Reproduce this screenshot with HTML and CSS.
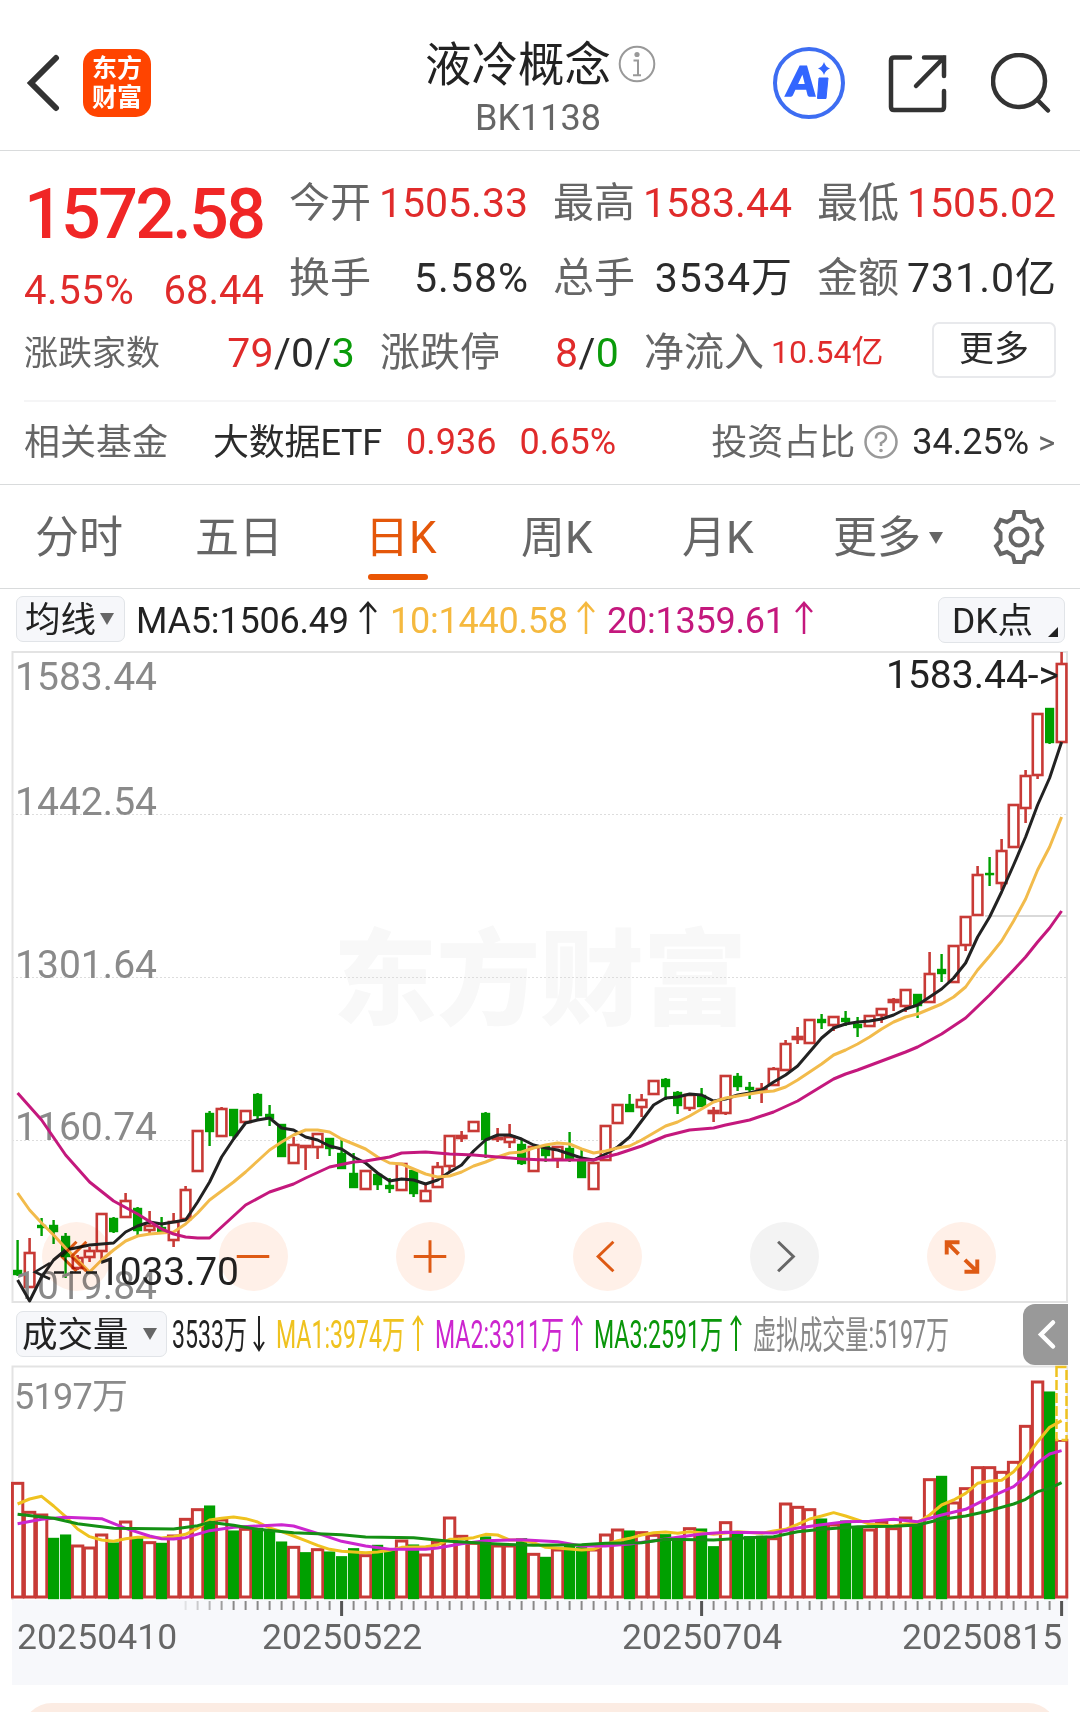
FILE: index.html
```html
<!DOCTYPE html>
<html lang="zh-CN">
<head>
    <meta charset="UTF-8">
    <meta name="viewport" content="width=device-width, initial-scale=1.0">
    <title>液冷概念 BK1138</title>
    <link rel="stylesheet" href="styles.css">
</head>
<body>

<header class="header">
    <svg class="back" width="34" height="60" viewBox="0 0 34 60"><path d="M30 5L5 30L30 55"/></svg>
    <div class="logo"><span>东方</span><span>财富</span></div>
    <div class="title">
        <h1>液冷概念<svg width="38" height="38" viewBox="0 0 38 38"><circle cx="19" cy="19" r="17.3"/><circle class="dot" cx="19" cy="9.5" r="2.6"/><path d="M15.5 15.5H20V30M15 30.3H23"/></svg></h1>
        <p>BK1138</p>
    </div>
    <div class="actions">
        <svg width="74" height="74" viewBox="0 0 74 74">
            <circle cx="37" cy="37" r="34" fill="none" stroke="#3d6df2" stroke-width="4"/>
            <text class="ai" x="19" y="50" transform="skewX(-6)">A</text>
            <path d="M47 32H56L54 52.5H45.5Z" fill="#3366ff" stroke="#3366ff" stroke-linejoin="round"/>
            <path d="M52 16Q53.500 21 58 22.500Q53.500 24 52 29Q50.500 24 46 22.500Q50.500 21 52 16Z" fill="#3366ff"/>
        </svg>
        <svg width="60" height="60" viewBox="0 0 60 60" class="line"><path d="M22 3.500H6Q3 3.500 3 6.500V53Q3 56 6 56H53Q56 56 56 53V37M36 3.500H56V22M56 3.500L28 32"/></svg>
        <svg width="62" height="62" viewBox="0 0 62 62" class="line"><circle cx="28" cy="28" r="26"/><path d="M46.500 47L57 57.500"/></svg>
    </div>
</header>

<section class="quote">
    <div class="summary">
        <div class="price">1572.58</div>
        <div class="change"><span>4.55%</span><span>68.44</span></div>
    </div>
    <div class="cell"><label>今开</label><b class="up">1505.33</b></div>
    <div class="cell"><label>最高</label><b class="up">1583.44</b></div>
    <div class="cell"><label>最低</label><b class="up">1505.02</b></div>
    <div class="cell"><label>换手</label><b class="wide">5.58%</b></div>
    <div class="cell"><label>总手</label><b class="wide cjk">3534万</b></div>
    <div class="cell"><label>金额</label><b class="wide cjk">731.0亿</b></div>
</section>

<section class="breadth">
    <div class="cell count"><label>涨跌家数</label><b><i class="up">79</i>/0/<i class="down">3</i></b></div>
    <div class="cell limit"><label>涨跌停</label><b><i class="up">8</i>/<i class="down">0</i></b></div>
    <div class="inflow"><label>净流入</label><b class="up cjk">10.54亿</b></div>
    <button class="more">更多</button>
</section>

<section class="fund">
    <label>相关基金</label>
    <span class="fund-name cjk">大数据ETF</span>
    <span class="up">0.936</span>
    <span class="up rate">0.65%</span>
    <label class="ratio">投资占比</label>
    <svg width="36" height="36" viewBox="0 0 36 36"><circle cx="18" cy="18" r="15.500"/><path d="M13 14.500Q13 9 18 9Q23 9 23 13.500Q23 16.500 18 19V22"/><circle class="dot" cx="18" cy="26.500" r="1.800"/></svg>
    <span class="ratio-value">34.25%</span>
    <span class="gt">&gt;</span>
</section>

<nav class="tabs">
    <a>分时</a>
    <a>五日</a>
    <a class="active">日K</a>
    <a>周K</a>
    <a>月K</a>
    <a>更多<i class="caret"></i></a>
    <svg width="56" height="56" viewBox="0 0 56 56" class="gear">
        <path d="M23.500 3H32.500L34 9.500L40 13L46.500 11L51 19L46.500 24V32L51 37L46.500 45L40 43L34 46.500L32.500 53H23.500L22 46.500L16 43L9.500 45L5 37L9.500 32V24L5 19L9.500 11L16 13L22 9.500Z"/>
        <circle cx="28" cy="28" r="8.500"/>
    </svg>
</nav>

<div class="ma-bar">
    <button class="select">均线<i class="caret"></i></button>
    <svg class="legend" width="800" height="60" viewBox="130 590 800 60">
        <text x="136" y="633.500" textLength="213" fill="#222">MA5:1506.49</text>
        <path d="M368 635V605M360 613L368 604L376 613" stroke="#222"/>
        <text x="390" y="633.500" textLength="178" fill="#f5b93f">10:1440.58</text>
        <path d="M586 635V605M578 613L586 604L594 613" stroke="#f5b93f"/>
        <text x="607" y="633.500" textLength="178" fill="#c4187d">20:1359.61</text>
        <path d="M804 635V605M796 613L804 604L812 613" stroke="#c4187d"/>
    </svg>
    <button class="select dk">DK点<i class="corner"></i></button>
</div>

<div class="chart">
    <svg id="kline" width="1058" height="652" viewBox="11 651 1058 652"></svg>
    <div class="tools">
        <span class="tool"><svg viewBox="0 0 70 70"><path d="M35 20L20 35L35 50M45 20L30 35L45 50"/></svg></span>
        <span class="tool"><svg viewBox="0 0 70 70"><path d="M18 35H51"/></svg></span>
        <span class="tool"><svg viewBox="0 0 70 70"><path d="M18 35H51M34.500 18.500V51.500"/></svg></span>
        <span class="tool"><svg viewBox="0 0 70 70"><path d="M41 20L25.500 35L41 50"/></svg></span>
        <span class="tool off"><svg viewBox="0 0 70 70"><path d="M28.500 20L44 35L28.500 50"/></svg></span>
        <span class="tool"><svg viewBox="0 0 70 70"><path class="thick" d="M20 33V20.500H33M20 20.500L32 32.500M51 38V50.500H38M51 50.500L38.500 38.500"/></svg></span>
    </div>
</div>

<div class="vol-bar">
    <button class="select">成交量<i class="caret"></i></button>
    <svg class="legend narrow" width="800" height="62" viewBox="170 1303 800 62">
        <text x="172" y="1347.500" textLength="75" lengthAdjust="spacingAndGlyphs" fill="#222">3533万</text>
        <path d="M259 1316V1350M254 1342L259 1350L264 1342" stroke="#222"/>
        <text x="276" y="1347.500" textLength="129" lengthAdjust="spacingAndGlyphs" fill="#efc21f">MA1:3974万</text>
        <path d="M418 1351V1317M413 1325L418 1317L423 1325" stroke="#efc21f"/>
        <text x="435" y="1347.500" textLength="129" lengthAdjust="spacingAndGlyphs" fill="#cc26cf">MA2:3311万</text>
        <path d="M577 1351V1317M572 1325L577 1317L582 1325" stroke="#cc26cf"/>
        <text x="594" y="1347.500" textLength="129" lengthAdjust="spacingAndGlyphs" fill="#0a960a">MA3:2591万</text>
        <path d="M736 1351V1317M731 1325L736 1317L741 1325" stroke="#0a960a"/>
        <text x="753" y="1347.500" textLength="196" lengthAdjust="spacingAndGlyphs" fill="#888">虚拟成交量:5197万</text>
    </svg>
    <div class="fold"><svg width="46" height="61" viewBox="0 0 46 61"><path d="M30 18.500L18 30.500L30 42.500"/></svg></div>
</div>

<svg id="volume" width="1058" height="235" viewBox="11 1365 1058 235"></svg>

<div class="axis">
    <svg id="ticks" width="1056" height="17" viewBox="12 1600 1056 17"></svg>
    <div class="dates">
        <span>20250410</span><span>20250522</span><span>20250704</span><span>20250815</span>
    </div>
</div>

<div class="banner"></div>

<script src="chart.js"></script>
</body>
</html>
```
FILE: styles.css
```css
* {
    box-sizing: border-box;
}
body {
    margin: 0;
    width: 1080px;
    height: 1712px;
    overflow: hidden;
    background: #fff;
    color: #2b2b2b;
    font-family: Roboto, "Noto Sans CJK SC", sans-serif;
}
h1, p {
    margin: 0;
    font-weight: 400;
}
b, i {
    font-weight: 400;
    font-style: normal;
}
label {
    padding-bottom: 7px;
    color: #666;
}
/* numbers with a Chinese unit sit on the same line as plain ones */
.cjk {
    padding-bottom: 7px;
}
.up {
    color: #e02b2b;
}
.down {
    color: #0a9b0a;
}

/* header */
.header {
    height: 151px;
    display: grid;
    grid-template-columns: 83px 200px 1fr 307px;
    border-bottom: 1px solid #d9dbdc;
}
.back {
    margin: 53px 0 0 26px;
    fill: none;
    stroke: #333;
    stroke-width: 6;
    stroke-linecap: round;
}
.logo {
    width: 68px;
    height: 68px;
    margin-top: 49px;
    padding-top: 5px;
    border-radius: 15px;
    background: #ff4400;
    color: #fff;
    font-size: 25px;
    font-weight: 700;
    line-height: 29px;
    text-align: center;
}
.logo span {
    display: block;
}
.title {
    padding: 30px 0 0 142px;
}
.title h1 {
    display: flex;
    align-items: center;
    gap: 7px;
    height: 60px;
    font-size: 46.5px;
    white-space: nowrap;
    color: #222;
}
.title h1 svg {
    margin-top: 7px;
    fill: none;
    stroke: #999;
    stroke-width: 2;
}
.dot {
    fill: #999;
    stroke: none;
}
.title p {
    margin: 7px 0 0 50px;
    font-size: 36px;
    line-height: 42px;
    color: #666;
}
.actions {
    display: flex;
}
.actions svg:nth-child(1) { margin: 46px 0 0 -1px; }
.actions svg:nth-child(2) { margin: 54px 0 0 42px; }
.actions svg:nth-child(3) { margin: 53px 0 0 43px; }
.line {
    fill: none;
    stroke: #333;
    stroke-width: 4.5;
    stroke-linecap: round;
}
.ai {
    font: 900 41px Lato, sans-serif;
    fill: #3366ff;
    stroke: #3366ff;
    stroke-width: 1.5;
}

/* quote */
.quote {
    display: grid;
    grid-template-columns: 240px repeat(3, 239px);
    grid-template-rows: 75px 75px;
    column-gap: 25px;
    padding: 14px 24px 0;
}
.summary {
    grid-row: span 2;
    color: #f02626;
}
.price {
    height: 97px;
    line-height: 99px;
    font-size: 70px;
    font-weight: 500;
    letter-spacing: -2.7px;
}
.change {
    display: flex;
    justify-content: space-between;
    font-size: 40px;
    line-height: 58px;
    color: #e02b2b;
}
.change span:first-child {
    letter-spacing: 0.6px;
}
.cell {
    display: flex;
    align-items: center;
    justify-content: space-between;
    font-size: 41px;
    white-space: nowrap;
}
.cell .wide {
    letter-spacing: 1px;
    margin-right: -1px;
}
.breadth {
    display: flex;
    align-items: center;
    height: 75px;
    padding: 0 24px;
}
.count {
    width: 331px;
}
.count label {
    font-size: 34px;
    padding-bottom: 5px;
}
.cell.count, .cell.limit {
    letter-spacing: 0.3px;
}
.cell label {
    letter-spacing: 0;
}
.limit {
    width: 239px;
    margin: 0 25px 0 25px;
}
.limit label, .inflow label {
    font-size: 40px;
}
.inflow {
    display: flex;
    align-items: center;
    gap: 7px;
}
.inflow b {
    font-size: 32px;
}
.more {
    width: 124px;
    height: 56px;
    margin: -5px 0 0 auto;
    padding: 0 0 1px;
    border: 2px solid #e8e9ec;
    border-radius: 7px;
    background: #fff;
    color: #2b2b2b;
    font: 35px/1 Roboto, "Noto Sans CJK SC", sans-serif;
}

/* related fund */
.fund {
    display: flex;
    align-items: center;
    height: 84px;
    margin: 10px 24px 0;
    padding-bottom: 2px;
    border-top: 2px solid #f5f5f6;
    font-size: 36px;
    white-space: nowrap;
}
.fund-name {
    margin: 0 24px 0 45px;
    letter-spacing: -0.2px;
}
.rate {
    margin-left: 23px;
}
.ratio {
    margin-left: auto;
}
.fund svg {
    margin: 0 13px 0 8px;
    fill: none;
    stroke: #999;
    stroke-width: 2.5;
}
.gt {
    width: 18px;
    margin-left: 9px;
    font-size: 33px;
    color: #666;
}

/* tabs */
.tabs {
    display: grid;
    grid-template-columns: 160px 170px 156px 161px 151px 158px 60px;
    height: 105px;
    padding-left: 35px;
    border-top: 1px solid #d9dbdc;
    border-bottom: 1px solid #d9dbdc;
    font-size: 44px;
    line-height: 107px;
    color: #666;
}
.tabs .active {
    color: #e4570a;
}
.active::after {
    content: "";
    display: block;
    width: 60px;
    height: 6px;
    margin: -18px 0 0 3px;
    border-radius: 3px;
    background: #ea5504;
}
.caret {
    display: inline-block;
    border: 7.5px solid transparent;
    border-top: 12px solid #666;
    border-bottom: 0;
}
.tabs .caret {
    margin: 0 0 9px 8px;
}
.gear {
    margin-top: 24px;
    fill: none;
    stroke: #666;
    stroke-width: 4;
}

/* indicator rows */
.ma-bar, .vol-bar {
    display: flex;
    padding-left: 16px;
}
.ma-bar {
    height: 62px;
}
.select {
    display: flex;
    align-items: center;
    height: 46px;
    margin-top: 7px;
    padding: 3px 0 0 8px;
    border: 1px solid #e1e4e8;
    border-radius: 7px;
    background: #f6f7fa;
    color: #222;
    font: 35.5px/1 Roboto, "Noto Sans CJK SC", sans-serif;
    white-space: nowrap;
}
.ma-bar .select {
    width: 109px;
}
.select .caret {
    margin: 0 0 3px 4px;
}
.legend {
    margin-left: 5px;
    overflow: visible;
    fill: none;
    stroke-width: 2.5;
    font-size: 36px;
}
.legend text {
    stroke: none;
}
.ma-bar .dk {
    position: relative;
    width: 127px;
    margin-left: 8px;
    margin-top: 8px;
    padding-left: 13px;
}
.corner {
    position: absolute;
    right: 6px;
    bottom: 5px;
    border: 5.5px solid #222;
    border-top-color: transparent;
    border-left-color: transparent;
}
.vol-bar {
    height: 62px;
}
.vol-bar .select {
    width: 151px;
    margin-top: 8px;
    padding-left: 5px;
}
.vol-bar .caret {
    margin-left: 14px;
}
.vol-bar .legend {
    margin-left: 3px;
    stroke-width: 2;
}
.narrow {
    font-size: 38px;
}
.fold {
    width: 45px;
    height: 61px;
    margin: 1px 12px 0 auto;
    border-radius: 12px 0 0 12px;
    background: #999;
}
.fold svg {
    fill: none;
    stroke: #fff;
    stroke-width: 4.5;
    stroke-linecap: round;
}

/* charts */
.chart {
    position: relative;
    height: 652px;
    margin-left: 11px;
}
svg {
    display: block;
    flex: none;
}
#volume {
    margin-left: 11px;
}
.frame {
    fill: none;
    stroke: #e3e3e3;
    stroke-width: 2;
}
.grid {
    stroke: #ddd;
    stroke-width: 1;
    stroke-dasharray: 2 2;
}
.watermark {
    font: 900 104px "Noto Sans CJK SC", sans-serif;
    fill: #f8f8f8;
}
.scale {
    font-size: 39px;
    fill: #8a8a8a;
}
.small {
    font-size: 36px;
}
.mark {
    font-size: 39px;
    fill: #222;
}
.rise {
    fill: #fff;
    stroke: #c83a36;
    stroke-width: 2.6;
}
#volume .rise {
    stroke-width: 3;
}
.fall {
    fill: #00a000;
    stroke: #00a000;
    stroke-width: 2.4;
}
.ma {
    fill: none;
    stroke-width: 3;
    stroke-linejoin: round;
}
.tools {
    position: absolute;
    left: 31px;
    top: 571px;
    display: flex;
    gap: 108px;
    mix-blend-mode: multiply;
}
.tool {
    width: 69px;
    height: 69px;
    border-radius: 50%;
    background: #fff0e8;
}
.tool svg {
    fill: none;
    stroke: #de5a14;
    stroke-width: 3;
}
.tool .thick {
    stroke-width: 4;
}
.tool.off {
    background: #f3f3f3;
}
.tool.off svg {
    stroke: #666;
}

/* time axis */
.axis {
    width: 1056px;
    height: 85px;
    margin-left: 12px;
    background: #f7f8fb;
}
.dates {
    display: flex;
    padding-left: 5px;
    font-size: 35.5px;
    line-height: 42px;
    color: #666;
    letter-spacing: 0.1px;
}
.dates span {
    width: 245px;
    margin-top: -1px;
}
.dates span:nth-child(2) { width: 360px; }
.dates span:nth-child(3) { width: 280px; }
.dates span:nth-child(4) { width: 160px; }
.banner {
    height: 60px;
    margin: 18px 22px 0;
    border-radius: 40px;
    background: #fcece3;
}
```
FILE: chart.js
```js
// [color, high, top, bottom, low] for each day
const candles = [
    ['g',1240,1271,1274,1276],['r',1238,1253,1287,1287],['g',1218,1226,1227,1236],['g',1220,1226,1231,1244],
    ['g',1233,1237,1256,1278],['r',1255,1258,1268,1270],['r',1247,1251,1257,1262],['r',1214,1214,1251,1259],
    ['g',1217,1219,1231,1233],['r',1193,1201,1217,1217],['g',1207,1209,1230,1235],['r',1211,1226,1230,1235],
    ['g',1217,1228,1232,1233],['r',1213,1222,1240,1247],['r',1186,1190,1219,1219],['r',1131,1131,1171,1171],
    ['g',1111,1114,1131,1146],['r',1107,1109,1136,1137],['g',1109,1110,1135,1138],['r',1111,1111,1122,1122],
    ['g',1093,1095,1115,1119],['g',1105,1115,1118,1126],['g',1124,1125,1156,1157],['r',1137,1145,1163,1163],
    ['r',1145,1146,1147,1170],['r',1134,1134,1147,1159],['g',1138,1139,1148,1156],['g',1140,1154,1168,1169],
    ['g',1153,1174,1187,1188],['r',1171,1171,1189,1189],['g',1172,1175,1184,1190],['g',1178,1186,1188,1193],
    ['r',1164,1164,1190,1190],['g',1169,1171,1193,1197],['r',1184,1191,1201,1201],['r',1162,1167,1187,1187],
    ['r',1135,1136,1166,1171],['r',1131,1136,1138,1142],['r',1122,1122,1131,1132],['g',1112,1114,1139,1158],
    ['r',1128,1138,1139,1142],['r',1124,1137,1142,1148],['g',1140,1145,1163,1165],['r',1147,1147,1171,1171],
    ['g',1145,1147,1155,1162],['r',1147,1147,1159,1168],['g',1132,1149,1158,1162],['g',1149,1162,1177,1178],
    ['r',1163,1163,1189,1189],['r',1126,1126,1160,1160],['r',1105,1105,1123,1123],['g',1094,1105,1111,1112],
    ['r',1094,1100,1107,1117],['r',1081,1081,1094,1094],['g',1078,1080,1086,1100],['g',1091,1093,1105,1114],
    ['r',1094,1095,1108,1111],['g',1088,1096,1106,1107],['r',1107,1111,1113,1122],['r',1076,1076,1113,1115],
    ['g',1073,1077,1086,1091],['g',1082,1088,1089,1099],['r',1083,1089,1091,1103],['r',1067,1069,1085,1085],
    ['r',1040,1044,1070,1070],['r',1027,1037,1039,1044],['r',1020,1020,1043,1044],['g',1014,1020,1022,1029],
    ['r',1017,1017,1025,1031],['g',1011,1019,1021,1026],['g',1017,1025,1027,1037],['r',1016,1016,1026,1026],
    ['r',1009,1009,1015,1023],['r',998,1000,1002,1011],['r',990,990,1006,1012],['g',994,995,1005,1018],
    ['r',952,974,1002,1002],['g',954,970,973,982],['r',946,946,982,982],['r',917,917,945,951],
    ['r',866,875,915,915],['g',857,874,874,886],['r',839,851,883,890],['r',805,805,847,847],
    ['r',770,776,808,823],['r',714,714,775,779],['g',708,709,742,744],['r',652,664,742,742]
];

// moving averages of the price, [day, y] pairs
const ma5 = [0,1280, 1,1301, 2,1277, 3,1260, 4,1250, 6,1245, 8,1243, 9,1232, 10,1226, 11,1222, 12,1224, 14,1220, 15,1202, 16,1182, 17,1157, 18,1139, 19,1123, 20,1120, 21,1118, 22,1128, 23,1130, 24,1137, 25,1140, 26,1146, 27,1149, 28,1157, 29,1163, 30,1173, 31,1181, 32,1179, 33,1180, 34,1184, 35,1180, 36,1172, 37,1165, 38,1151, 39,1140, 40,1135, 41,1135, 42,1139, 43,1145, 44,1148, 45,1150, 46,1154, 47,1158, 48,1160, 49,1154, 50,1147, 51,1137, 52,1121, 53,1105, 54,1098, 55,1097, 56,1094, 57,1095, 58,1101, 59,1099, 60,1095, 61,1093, 62,1090, 63,1082, 64,1075, 65,1066, 66,1052, 67,1038, 68,1028, 69,1024, 70,1022, 71,1021, 72,1019, 73,1015, 74,1009, 75,1005, 76,997, 77,989, 78,978, 79,963, 80,937, 81,917, 82,892, 83,865, 84,837, 85,805, 86,778, 87,742];
const ma10 = [0,1193, 1,1210, 2,1223, 3,1235, 4,1248, 5,1260, 6,1272, 7,1260, 8,1250, 9,1241, 10,1236, 11,1234, 12,1233, 13,1232, 14,1224, 15,1213, 16,1200, 18,1182, 19,1172, 20,1161, 21,1150, 22,1142, 23,1135, 24,1130, 25,1130, 26,1132, 27,1139, 28,1144, 29,1149, 30,1157, 31,1163, 32,1164, 33,1169, 34,1174, 35,1177, 36,1176, 37,1172, 38,1166, 39,1162, 40,1157, 41,1153, 42,1152, 43,1148, 44,1145, 45,1143, 46,1144, 47,1149, 48,1153, 49,1151, 50,1148, 51,1146, 52,1140, 53,1133, 54,1126, 55,1122, 56,1116, 57,1109, 58,1102, 59,1098, 60,1096, 61,1094, 62,1092, 63,1091, 64,1087, 65,1080, 66,1072, 67,1064, 68,1055, 69,1050, 70,1044, 71,1037, 72,1029, 73,1022, 74,1017, 75,1014, 76,1009, 77,1004, 78,997, 79,987, 80,970, 81,956, 82,941, 83,921, 84,899, 85,870, 86,847, 87,817];
const ma20 = [0,1093, 2,1120, 4,1155, 6,1182, 8,1201, 10,1214, 12,1229, 13,1234, 14,1237, 15,1238, 16,1238, 17,1227, 19,1205, 21,1192, 23,1184, 24,1178, 26,1167, 28,1162, 29,1161, 31,1157, 32,1153, 34,1152, 36,1154, 38,1155, 40,1157, 42,1159, 44,1160, 46,1160, 48,1160, 50,1154, 52,1146, 54,1136, 56,1130, 58,1128, 59,1125, 61,1120, 63,1112, 65,1101, 68,1079, 69,1074, 70,1070, 72,1061, 74,1052, 75,1047, 77,1034, 79,1018, 81,995, 83,970, 84,957, 85,942, 86,928, 87,911];

// volume tops, in thirds of a pixel below y = 1300
const volumes = [550,637,645,714,704,738,744,705,728,666,714,728,729,708,658,629,617,660,692,688,684,692,725,742,757,749,755,769,745,767,735,752,723,734,765,727,654,709,730,710,738,738,715,763,771,750,735,742,750,705,690,692,698,706,703,712,686,686,739,668,698,709,708,716,612,622,629,656,675,662,680,690,667,686,654,668,539,528,609,566,503,503,517,487,379,246,275,421];
const volumeColors = 'rrrggrrrgrgrgrrrgrgrgggrgrgggrggrgrrrrrgrrgrgrggrrrgrrggrggrgggrrrrgrggrrrrgrgrrrrrrrrgr';
const vma1 = [0,612, 1,597, 2,589, 3,618, 4,650, 5,687, 6,710, 7,720, 8,724, 9,716, 10,712, 11,712, 12,714, 13,710, 14,703, 15,685, 16,660, 17,655, 18,651, 19,656, 20,666, 21,684, 22,695, 23,708, 24,722, 25,736, 26,748, 27,754, 29,758, 30,756, 31,751, 32,742, 34,740, 35,735, 36,718, 37,717, 38,713, 39,703, 40,705, 41,720, 42,720, 43,728, 44,742, 46,747, 47,750, 48,748, 49,733, 50,722, 51,715, 52,705, 53,698, 54,696, 55,700, 56,695, 57,698, 58,703, 59,699, 60,695, 62,700, 63,693, 64,688, 65,673, 66,657, 67,648, 68,638, 69,648, 70,660, 71,672, 73,678, 74,672, 75,668, 76,645, 77,615, 78,600, 79,580, 80,550, 81,543, 82,541, 83,515, 84,475, 85,425, 86,382, 87,362];
const vma2 = [0,671, 2,658, 4,652, 7,656, 9,685, 11,708, 12,716, 13,717, 14,713, 16,692, 18,682, 20,678, 22,674, 23,678, 25,700, 27,724, 29,738, 31,748, 34,748, 35,744, 37,731, 39,722, 42,719, 45,725, 47,738, 49,738, 51,732, 53,722, 55,712, 57,702, 59,697, 63,699, 65,684, 67,674, 69,665, 71,664, 73,658, 75,665, 77,645, 79,628, 81,592, 83,560, 84,530, 85,488, 86,462, 87,452];
const vma3 = [0,643, 3,655, 5,671, 8,685, 13,687, 15,677, 16,667, 18,676, 20,688, 23,698, 27,704, 29,711, 33,713, 36,724, 40,732, 43,736, 47,734, 49,730, 52,728, 54,718, 58,720, 61,713, 63,710, 65,695, 67,688, 70,680, 73,679, 75,675, 77,658, 79,648, 81,632, 83,612, 84,598, 85,575, 86,565, 87,548];

const dayX = i => 17.6 + i * 12;
const volY = v => 1300 + v / 3;

function line(data, color, y) {
    let points = '';
    for (let i = 0; i < data.length; i += 2) {
        points += dayX(data[i]) + ',' + y(data[i + 1]) + ' ';
    }
    return `<polyline class="ma" stroke="${color}" points="${points}"/>`;
}

function drawKline() {
    let out = '<text class="watermark" x="333" y="1017" textLength="414">东方财富</text>';
    [814, 977, 1140].forEach(y => {
        out += `<path class="grid" d="M12 ${y}.5H1067"/>`;
    });
    out += '<rect class="frame" x="12.5" y="652" width="1054.500" height="650"/>';
    out += '<path d="M985 916H1067" stroke="#ccc" stroke-width="1.500"/>';
    candles.forEach(([c, high, top, bottom, low], i) => {
        const x = dayX(i);
        const cls = c === 'r' ? 'rise' : 'fall';
        const w = c === 'r' ? 9.6 : 6.8;
        out += `<path class="${cls}" d="M${x} ${high}V${top}M${x} ${bottom}V${low}"/>`;
        out += `<rect class="${cls}" x="${x - w / 2}" y="${top}" width="${w}" height="${Math.max(bottom - top, 0.1)}"/>`;
    });
    [['1583.44', 690], ['1442.54', 815], ['1301.64', 978], ['1160.74', 1140], ['1019.84', 1299]].forEach(([t, y]) => {
        out += `<text class="scale" x="15" y="${y}" textLength="142">${t}</text>`;
    });
    out += line(ma5, '#222', y => y) + line(ma10, '#f2bb4b', y => y) + line(ma20, '#c4187d', y => y);
    out += '<text class="mark" x="886" y="688" textLength="173">1583.44-&gt;</text>';
    out += '<path d="M50 1263L35 1272L50 1279M54 1272.500H64M70 1272.500H81M86 1272.500H97" fill="none" stroke="#222" stroke-width="2.500"/>';
    out += '<text class="mark" x="98" y="1285" textLength="141">1033.70</text>';
    document.getElementById('kline').innerHTML = out;
}

function drawVolume() {
    let out = '<path class="frame" d="M12.500 1600V1366.500H1067V1600"/>';
    out += '<text class="scale small" x="14" y="1408.500" textLength="114">5197万</text>';
    volumes.forEach((v, i) => {
        const x = dayX(i);
        const cls = volumeColors[i] === 'r' ? 'rise' : 'fall';
        const w = cls === 'rise' ? 10.4 : 8.8;
        out += `<rect class="${cls}" x="${x - w / 2}" y="${volY(v) + (cls === 'fall' ? 1 : 0)}" width="${w}" height="${1597 - volY(v)}"/>`;
    });
    // projected volume of the current day
    out += '<rect x="1056.500" y="1367" width="10" height="73" fill="#fff" stroke="#efc21f" stroke-width="2.500" stroke-dasharray="10 3"/>';
    out += line(vma1, '#efc21f', volY) + line(vma2, '#cc26cf', volY) + line(vma3, '#149014', volY);
    document.getElementById('volume').innerHTML = out;
}

function drawTicks() {
    let out = '';
    for (let i = 14; i < 88; i++) {
        const major = i % 30 === 27;
        const opacity = Math.min(1, (i - 13) * 0.2);
        out += `<path d="M${dayX(i)} 1601V${major ? 1616 : 1610}" stroke="${major ? '#555' : '#888'}" stroke-width="${major ? 3 : 2}" opacity="${opacity}"/>`;
    }
    document.getElementById('ticks').innerHTML = out;
}

drawKline();
drawVolume();
drawTicks();
```
